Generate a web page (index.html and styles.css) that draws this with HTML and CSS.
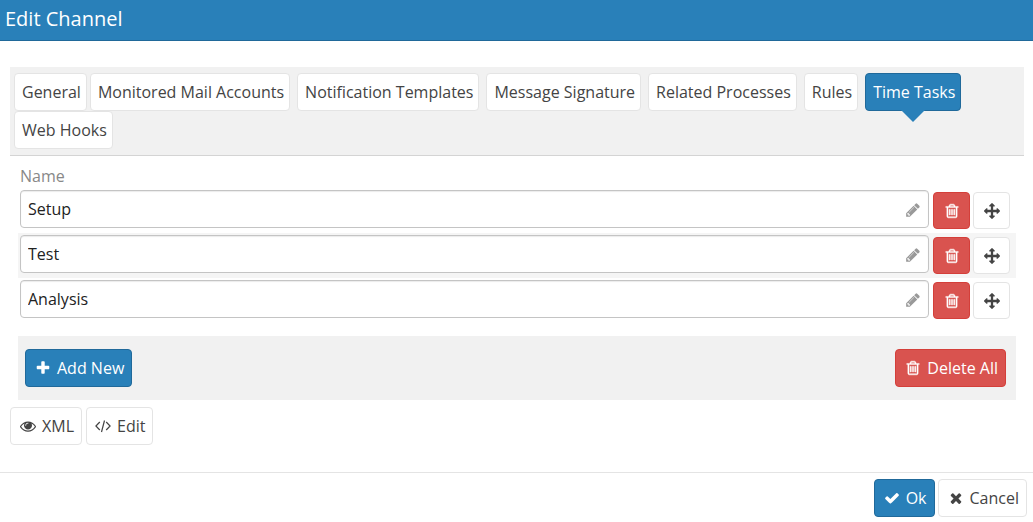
FILE: index.html
```html
<!DOCTYPE html>
<html lang="en">
<head>
<meta charset="utf-8">
<title>Edit Channel</title>
<link rel="stylesheet" href="styles.css">
</head>
<body>
<svg class="sprite" aria-hidden="true">
  <symbol id="plus" viewBox="0 0 1792 1792"><path d="M1600 736v192q0 40-28 68t-68 28h-416v416q0 40-28 68t-68 28h-192q-40 0-68-28t-28-68v-416h-416q-40 0-68-28t-28-68v-192q0-40 28-68t68-28h416v-416q0-40 28-68t68-28h192q40 0 68 28t28 68v416h416q40 0 68 28t28 68z"/></symbol>
  <symbol id="pencil" viewBox="0 0 1792 1792"><path d="M491 1536l91-91-235-235-91 91v107h128v128h107zm523-928q0-22-22-22-10 0-17 7l-542 542q-7 7-7 17 0 22 22 22 10 0 17-7l542-542q7-7 7-17zm-54-192l416 416-832 832h-416v-416zm683 96q0 53-37 90l-166 166-416-416 166-165q36-38 90-38 53 0 91 38l235 234q37 39 37 91z"/></symbol>
  <symbol id="trash" viewBox="0 0 1792 1792"><path stroke="currentColor" stroke-width="50" d="M704 736v576q0 14-9 23t-23 9h-64q-14 0-23-9t-9-23v-576q0-14 9-23t23-9h64q14 0 23 9t9 23zm256 0v576q0 14-9 23t-23 9h-64q-14 0-23-9t-9-23v-576q0-14 9-23t23-9h64q14 0 23 9t9 23zm256 0v576q0 14-9 23t-23 9h-64q-14 0-23-9t-9-23v-576q0-14 9-23t23-9h64q14 0 23 9t9 23zm128 724v-948h-896v948q0 22 7 40.500t14.500 27 10.500 8.500h832q3 0 10.500-8.500t14.500-27 7-40.500zm-672-1076h448l-48-117q-7-9-17-11h-317q-10 2-17 11zm928 32v64q0 14-9 23t-23 9h-96v948q0 83-47 143.500t-113 60.500h-832q-66 0-113-58.500t-47-141.500v-952h-96q-14 0-23-9t-9-23v-64q0-14 9-23t23-9h309l70-167q15-37 54-63t79-26h320q40 0 79 26t54 63l70 167h309q14 0 23 9t9 23z"/></symbol>
  <symbol id="arrows" viewBox="0 0 1792 1792"><path d="M1792 896q0 26-19 45l-256 256q-19 19-45 19t-45-19-19-45v-128h-384v384h128q26 0 45 19t19 45-19 45l-256 256q-19 19-45 19t-45-19l-256-256q-19-19-19-45t19-45 45-19h128v-384h-384v128q0 26-19 45t-45 19-45-19l-256-256q-19-19-19-45t19-45l256-256q19-19 45-19t45 19 19 45v128h384v-384h-128q-26 0-45-19t-19-45 19-45l256-256q19-19 45-19t45 19l256 256q19 19 19 45t-19 45-45 19h-128v384h384v-128q0-26 19-45t45-19 45 19l256 256q19 19 19 45z"/></symbol>
  <symbol id="eye" viewBox="0 0 1792 1792"><path d="M1664 960q-152-236-381-353 61 104 61 225 0 185-131.500 316.500t-316.500 131.500-316.500-131.500-131.500-316.500q0-121 61-225-229 117-381 353 133 205 333.500 326.500t434.500 121.500 434.500-121.500 333.500-326.500zm-720-384q0-20-14-34t-34-14q-125 0-214.500 89.500t-89.500 214.500q0 20 14 34t34 14 34-14 14-34q0-86 61-147t147-61q20 0 34-14t14-34zm848 384q0 34-20 69-140 230-376.500 368.500t-499.500 138.500-499.500-139-376.500-368q-20-35-20-69t20-69q140-229 376.500-368t499.500-139 499.500 139 376.500 368q20 35 20 69z"/></symbol>
  <symbol id="code" viewBox="0 0 16 16"><path d="M4.800 4L.9 8l3.900 4M11.200 4l3.900 4-3.900 4M9.500 2.500L6.500 14" fill="none" stroke="currentColor" stroke-width="1.200"/></symbol>
  <symbol id="check" viewBox="0 0 1792 1792"><path d="M1671 566q0 40-28 68l-724 724-136 136q-28 28-68 28t-68-28l-136-136-362-362q-28-28-28-68t28-68l136-136q28-28 68-28t68 28l294 295 656-657q28-28 68-28t68 28l136 136q28 28 28 68z"/></symbol>
  <symbol id="times" viewBox="0 0 1792 1792"><path d="M1490 1322q0 40-28 68l-136 136q-28 28-68 28t-68-28l-294-294-294 294q-28 28-68 28t-68-28l-136-136q-28-28-28-68t28-68l294-294-294-294q-28-28-28-68t28-68l136-136q28-28 68-28t68 28l294 294 294-294q28-28 68-28t68 28l136 136q28 28 28 68t-28 68l-294 294 294 294q28 28 28 68z"/></symbol>
</svg>
<header class="titlebar"><h1 class="title">Edit Channel</h1></header>
<main class="content">
  <nav class="tabs" aria-label="Channel settings">
    <button class="btn tab" type="button">General</button>
    <button class="btn tab" type="button">Monitored Mail Accounts</button>
    <button class="btn tab" type="button">Notification Templates</button>
    <button class="btn tab" type="button">Message Signature</button>
    <button class="btn tab" type="button">Related Processes</button>
    <button class="btn tab" type="button">Rules</button>
    <button class="btn tab primary active" type="button" aria-current="page">Time Tasks</button>
    <button class="btn tab" type="button">Web Hooks</button>
  </nav>
  <section class="panel">
    <table class="tasks">
      <thead><tr><th class="name-head" id="name" colspan="2">Name</th></tr></thead>
      <tbody>
        <tr class="row">
          <td class="name-cell"><div class="field"><input class="input" type="text" value="Setup" aria-labelledby="name"><svg class="icon pencil"><use href="#pencil"/></svg></div></td>
          <td class="action-cell"><div class="actions"><button class="btn square danger" type="button" aria-label="Delete Setup"><svg class="icon"><use href="#trash"/></svg></button><button class="btn square" type="button" aria-label="Move Setup"><svg class="icon"><use href="#arrows"/></svg></button></div></td>
        </tr>
        <tr class="row">
          <td class="name-cell"><div class="field"><input class="input" type="text" value="Test" aria-labelledby="name"><svg class="icon pencil"><use href="#pencil"/></svg></div></td>
          <td class="action-cell"><div class="actions"><button class="btn square danger" type="button" aria-label="Delete Test"><svg class="icon"><use href="#trash"/></svg></button><button class="btn square" type="button" aria-label="Move Test"><svg class="icon"><use href="#arrows"/></svg></button></div></td>
        </tr>
        <tr class="row">
          <td class="name-cell"><div class="field"><input class="input" type="text" value="Analysis" aria-labelledby="name"><svg class="icon pencil"><use href="#pencil"/></svg></div></td>
          <td class="action-cell"><div class="actions"><button class="btn square danger" type="button" aria-label="Delete Analysis"><svg class="icon"><use href="#trash"/></svg></button><button class="btn square" type="button" aria-label="Move Analysis"><svg class="icon"><use href="#arrows"/></svg></button></div></td>
        </tr>
      </tbody>
    </table>
    <div class="toolbar">
      <button class="btn primary" type="button"><svg class="icon"><use href="#plus"/></svg>Add New</button>
      <button class="btn danger" type="button"><svg class="icon"><use href="#trash"/></svg>Delete All</button>
    </div>
  </section>
  <div class="tools">
    <button class="btn" type="button"><svg class="icon"><use href="#eye"/></svg>XML</button>
    <button class="btn" type="button"><svg class="icon"><use href="#code"/></svg>Edit</button>
  </div>
</main>
<footer class="footer">
  <button class="btn primary" type="button"><svg class="icon"><use href="#check"/></svg>Ok</button>
  <button class="btn" type="button"><svg class="icon"><use href="#times"/></svg>Cancel</button>
</footer>
</body>
</html>
```

FILE: styles.css
```css
* { box-sizing: border-box; }
body {
  margin: 0;
  background: #fff;
  color: #444;
  font: 16px/22px "Open Sans", sans-serif;
}
.sprite { display: none; }
.titlebar {
  padding: 5px 5px 7px;
  background: #2980b9;
  border-bottom: 1px solid #20699a;
}
.title {
  margin: 0;
  color: #fff;
  font-size: 20px;
  font-weight: 400;
  line-height: 28px;
}
.content { padding: 26px 9px 0 10px; }
.btn {
  display: inline-flex;
  align-items: center;
  justify-content: center;
  gap: 6px;
  height: 38px;
  padding: 0 7px 0 8px;
  border: 1px solid #e4e4e4;
  border-radius: 4px;
  background: #fff;
  color: #444;
  font: inherit;
  white-space: nowrap;
}
.primary { background: #2980b9; border-color: #20699a; color: #fff; }
.danger { background: #d9534f; border-color: #d43f3a; color: #fff; }
.icon { flex: none; width: 16px; height: 16px; fill: currentColor; }
.tabs {
  display: flex;
  flex-wrap: wrap;
  padding: 6px 4px;
  background: #f1f1f1;
  border-bottom: 1px solid #d4d4d4;
}
.tab { position: relative; margin-right: 7px; padding: 0 5px 0 7px; }
.tab:first-child { margin-right: 3px; }
.active::after {
  content: "";
  position: absolute;
  top: 100%;
  left: 50%;
  margin-left: -12px;
  border: 12px solid transparent;
  border-top-color: #2980b9;
  border-bottom: 0;
}
.panel { padding: 10px 8px 0; }
.tasks { width: 100%; border-collapse: collapse; }
.name-head {
  padding: 0 2px;
  color: #888;
  font-weight: 400;
  line-height: 20px;
  text-align: left;
}
.row:nth-child(even) { background: #f5f5f5; }
.name-cell { padding: 3px 4px 4px 2px; }
.action-cell { width: 83px; padding: 4px 6px 4px 0; }
.name-head { padding-bottom: 2px; }
.field { position: relative; }
.input {
  display: block;
  width: 100%;
  height: 38px;
  padding: 0 32px 0 7px;
  border: 1px solid #c4c4c4;
  border-radius: 4px;
  background: #fff;
  box-shadow: inset 0 1px 1px rgba(0, 0, 0, 0.08);
  color: #222;
  font: inherit;
}
.name-cell { padding: 2px 4px 5px 2px; }
.pencil { position: absolute; top: 12px; right: 8px; color: #999; }
.actions { display: flex; gap: 3px; }
.square { width: 37px; height: 37px; padding: 0; }
.toolbar {
  display: flex;
  justify-content: space-between;
  margin-top: 13px;
  padding: 13px 10px 13px 7px;
  background: #f1f1f1;
}
.toolbar .btn { padding: 0 7px 0 9px; }
.tools { display: flex; gap: 4px; padding-top: 7px; }
.tools .btn:first-child { padding-left: 9px; }
.footer {
  display: flex;
  justify-content: flex-end;
  gap: 3px;
  margin-top: 27px;
  padding: 6px 6px 4px;
  border-top: 1px solid #e4e4e4;
}
.footer .btn { padding: 0 7px 0 9px; }
```
